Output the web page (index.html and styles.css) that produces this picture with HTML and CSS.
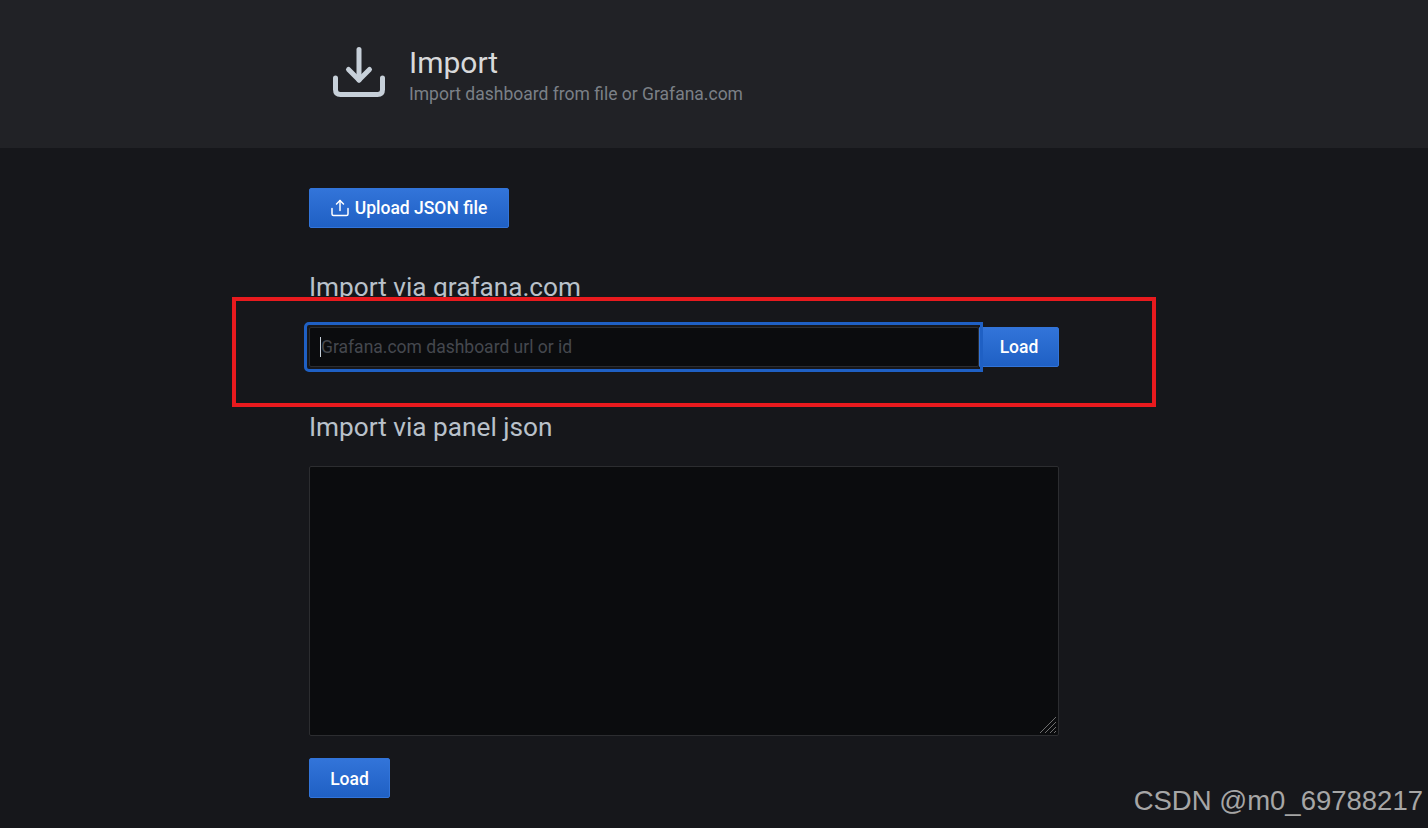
FILE: index.html
```html
<!DOCTYPE html>
<html lang="en">
<head>
<meta charset="utf-8">
<title>Import</title>
<link rel="stylesheet" href="styles.css">
</head>
<body>
<header class="page-header">
  <div class="header-inner">
    <svg class="header-icon" viewBox="0 0 52 50" fill="none" stroke="#c7d0d9" stroke-width="5" stroke-linecap="round" stroke-linejoin="round" aria-hidden="true">
      <path d="M26 2.500V33"/>
      <path d="M15.500 22.500L26 33L36.500 22.500"/>
      <path d="M2.500 31V42.500Q2.500 47.500 7.500 47.500H44.500Q49.500 47.500 49.500 42.500V31"/>
    </svg>
    <div class="header-text">
      <h1 class="title">Import</h1>
      <p class="subtitle">Import dashboard from file or Grafana.com</p>
    </div>
  </div>
</header>
<main class="content">
  <button class="btn btn-upload" type="button">
    <svg class="btn-icon" viewBox="0 0 18 18" fill="none" stroke="#fff" stroke-width="1.500" stroke-linecap="round" stroke-linejoin="round" aria-hidden="true">
      <path d="M9 11.500V1.500"/>
      <path d="M5.500 5L9 1.500L12.500 5"/>
      <path d="M1 9.500V15Q1 16.500 2.500 16.500H15.500Q17 16.500 17 15V9.500"/>
    </svg>
    Upload JSON file
  </button>
  <h2 class="section-title section-first">Import via grafana.com</h2>
  <div class="input-row">
    <div class="fake-input">
      <span class="caret"></span><span class="placeholder">Grafana.com dashboard url or id</span>
    </div>
    <button class="btn btn-load-inline" type="button">Load</button>
  </div>
  <h2 class="section-title section-second">Import via panel json</h2>
  <div class="textarea">
    <svg class="grip" viewBox="0 0 18 18" stroke="#6e6e6e" stroke-width="1" aria-hidden="true">
      <path d="M1 17L17 1M6 17L17 6M11 17L17 11M15 17L17 15"/>
    </svg>
  </div>
  <button class="btn btn-load" type="button">Load</button>
</main>
<div class="annotation"></div>
<div class="watermark">CSDN @m0_69788217</div>
</body>
</html>
```
FILE: styles.css
```css
* { box-sizing: border-box; }
html, body { margin: 0; height: 100%; }
body {
  position: relative;
  width: 1428px;
  height: 828px;
  overflow: hidden;
  background: #16171b;
  font-family: Roboto, "Liberation Sans", sans-serif;
  color: #c7d0d9;
}
.page-header {
  height: 148px;
  background: #212226;
  padding: 47px 0 0 333px;
}
.header-inner { display: flex; align-items: flex-start; }
.header-icon { width: 52px; height: 50px; flex: none; }
.header-text { margin-left: 24px; }
.title {
  margin: 0;
  font-size: 30px;
  line-height: 32px;
  font-weight: 400;
  color: #d8d9da;
}
.subtitle {
  margin: 4px 0 0;
  font-size: 17.5px;
  line-height: 22px;
  color: #7b8087;
}
.content { padding: 40px 0 0 309px; width: 1059px; }
.btn {
  display: flex;
  align-items: center;
  justify-content: center;
  height: 40px;
  padding: 0;
  border: 1px solid #3274d9;
  border-radius: 2px;
  background: linear-gradient(180deg, #3274d9, #1f60c4);
  color: #fff;
  font-family: inherit;
  font-size: 17.500px;
  font-weight: 500;
}
.btn-upload { width: 200px; }
.btn-icon { width: 18px; height: 18px; margin-right: 6px; }
.section-title {
  margin: 0;
  font-size: 26.200px;
  line-height: 28px;
  font-weight: 400;
  color: #b9c1ca;
}
.section-first { margin-top: 45px; }
.section-second { margin-top: 46px; }
.input-row { display: flex; margin-top: 26px; height: 40px; }
.fake-input {
  position: relative;
  z-index: 1;
  display: flex;
  align-items: center;
  width: 670px;
  height: 40px;
  padding-left: 10px;
  background: #0b0c0e;
  border: 1px solid #2c2d30;
  border-radius: 2px;
  font-size: 17.500px;
}
.fake-input::after {
  content: "";
  position: absolute;
  inset: -6px -5px -6px -6px;
  border: 3px solid #1f60c4;
  border-radius: 5px 0 0 5px;
}
.caret { width: 1px; height: 20px; background: #c7d0d9; }
.placeholder { color: #45484e; }
.btn-load-inline { width: 80px; border-radius: 0 2px 2px 0; }
.textarea {
  position: relative;
  width: 750px;
  height: 270px;
  margin-top: 25px;
  background: #0b0c0e;
  border: 1px solid #2c2d30;
  border-radius: 2px;
}
.grip { position: absolute; right: 1px; bottom: 1px; width: 18px; height: 18px; }
.btn-load { width: 81px; margin-top: 22px; padding-top: 1px; }
.annotation {
  position: absolute;
  left: 232px;
  top: 297px;
  width: 924px;
  height: 110px;
  border: 4px solid #e81a1e;
}
.watermark {
  position: absolute;
  right: 5px;
  bottom: 11px;
  font-family: "Liberation Sans", sans-serif;
  font-size: 27.500px;
  line-height: 32px;
  color: #a6a6a6;
}
```
